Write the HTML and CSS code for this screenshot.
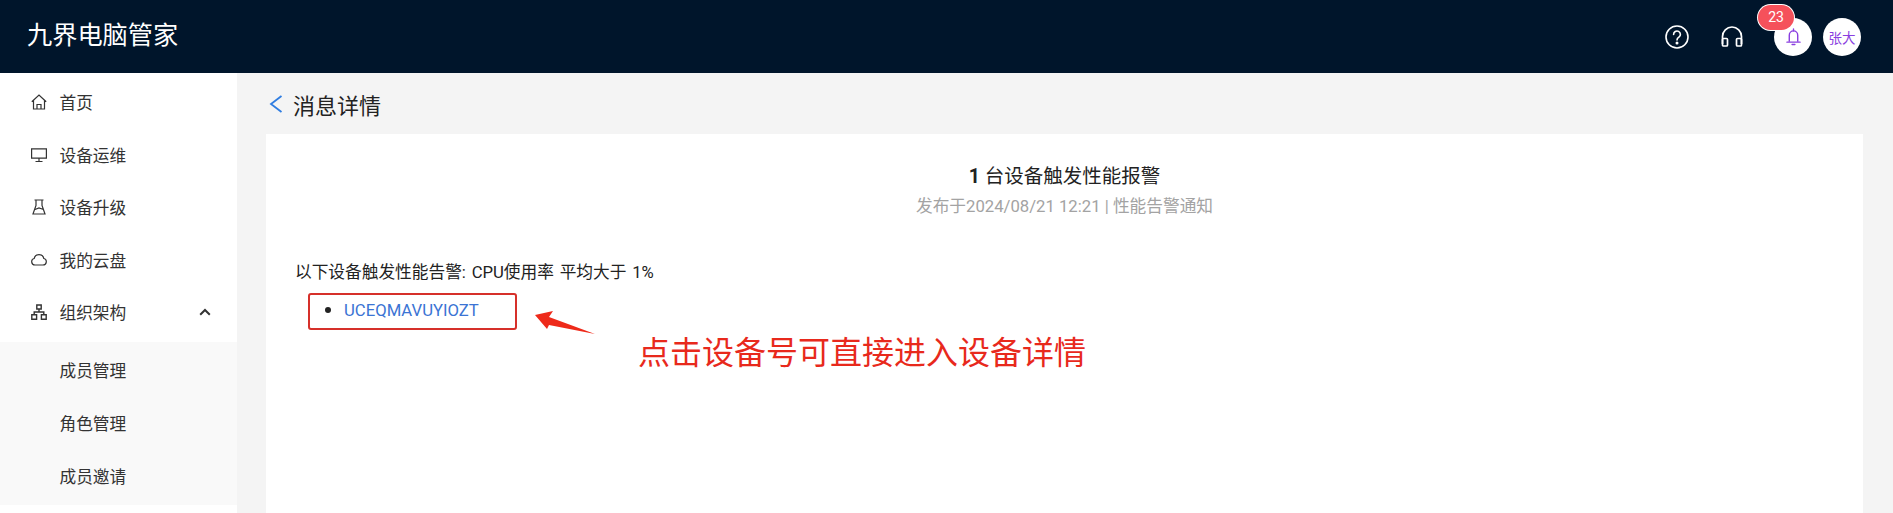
FILE: index.html
```html
<!DOCTYPE html>
<html lang="zh-CN">
<head>
    <meta charset="UTF-8">
    <meta name="viewport" content="width=device-width, initial-scale=1.0">
    <title>九界电脑管家</title>
    <link rel="stylesheet" href="styles.css">
</head>
<body>
    <!-- Top bar -->
    <header class="topbar">
        <div class="logo">九界电脑管家</div>
        <div class="top-actions">
            <svg class="top-icon" viewBox="0 0 24 24" fill="none" stroke="#fff" stroke-width="1.6">
                <circle cx="12" cy="12" r="11"/>
                <path d="M8.600 9.400a3.400 3.400 0 1 1 5.300 2.800c-1.200.8-1.900 1.400-1.900 2.800" stroke-linecap="round"/>
                <circle cx="12" cy="18" r=".7" fill="#fff"/>
            </svg>
            <svg class="top-icon head-icon" viewBox="0 0 22 21" fill="none" stroke="#fff" stroke-width="1.7">
                <path d="M1.500 18V10.500a9.500 9.500 0 0 1 19 0V18"/>
                <rect x="1.500" y="12.500" width="5" height="7.500" rx="1"/>
                <rect x="15.500" y="12.500" width="5" height="7.500" rx="1"/>
            </svg>
            <div class="bell-wrap">
                <span class="badge">23</span>
                <div class="round-btn">
                    <svg class="bell" viewBox="0 0 16 18" fill="none" stroke="#8a3fe0" stroke-width="1.500">
                        <path d="M3.500 14V7a4.500 4.500 0 0 1 9 0v7"/>
                        <path d="M1 14.500h14" stroke-linecap="round"/>
                        <path d="M8 .5v2M6.500 17h3" stroke-linecap="round"/>
                    </svg>
                </div>
            </div>
            <div class="round-btn avatar">张大</div>
        </div>
    </header>

    <div class="layout">
        <!-- Side menu -->
        <nav class="sidebar">
            <a class="menu-item">
                <svg class="menu-icon" viewBox="0 0 16 16" fill="none" stroke="#333" stroke-width="1.200">
                    <path d="M.8 7.800 8 1l7.200 6.800M2.500 6.500v8.500h11V6.500M6 15v-4.500h4V15"/>
                </svg>
                首页
            </a>
            <a class="menu-item">
                <svg class="menu-icon" viewBox="0 0 16 16" fill="none" stroke="#333" stroke-width="1.200">
                    <path d="M.6 1.800h14.800v9.400H.6zM8 11.200v3M4.500 14.500h7"/>
                </svg>
                设备运维
            </a>
            <a class="menu-item">
                <svg class="menu-icon" viewBox="0 0 16 16" fill="none" stroke="#333" stroke-width="1.200">
                    <path d="M3.500 1h9M5 1v5.500L2 15h12l-3-8.500V1M4 10.500 8 9l4.500 1.500"/>
                </svg>
                设备升级
            </a>
            <a class="menu-item">
                <svg class="menu-icon" viewBox="0 0 16 16" fill="none" stroke="#333" stroke-width="1.200">
                    <path d="M4 13a3.300 3.300 0 0 1-.8-6.500 4.900 4.900 0 0 1 9.600 0 3.300 3.300 0 0 1-.8 6.500z"/>
                </svg>
                我的云盘
            </a>
            <a class="menu-item">
                <svg class="menu-icon" viewBox="0 0 16 16" fill="none" stroke="#333" stroke-width="1.400">
                    <path d="M5.800 1h4.400v4H5.800zM.8 10.800h4.800v4.400H.8zM10.400 10.800h4.800v4.400h-4.800zM8 5v3M3.200 10.800V8h9.600v2.800"/>
                </svg>
                组织架构
                <svg class="arrow" viewBox="0 0 12 8" fill="none" stroke="#333" stroke-width="2">
                    <path d="M1.200 6.800 6 2l4.800 4.800"/>
                </svg>
            </a>
            <div class="submenu">
                <a class="sub-item">成员管理</a>
                <a class="sub-item">角色管理</a>
                <a class="sub-item">成员邀请</a>
            </div>
        </nav>

        <!-- Main area -->
        <main class="content">
            <div class="page-head">
                <svg class="back" viewBox="0 0 14 18" fill="none" stroke="#2f7de1" stroke-width="1.800">
                    <path d="M12.500 1 2 9l10.500 8"/>
                </svg>
                <h2 class="page-title">消息详情</h2>
            </div>
            <section class="card">
                <h3 class="msg-title"><b>1</b> 台设备触发性能报警</h3>
                <p class="msg-meta">发布于2024/08/21 12:21 | 性能告警通知</p>
                <p class="msg-text">以下设备触发性能告警: CPU使用率 平均大于 1%</p>
                <div class="msg-row">
                    <div class="device-box">
                        <ul class="device-list">
                            <li><a class="device-link">UCEQMAVUYIOZT</a></li>
                        </ul>
                    </div>
                    <svg class="note-arrow" viewBox="0 0 60 23">
                        <path d="M0 4 18 0 14 6 60 23 14 14 12 18z" fill="#ee2a1a"/>
                    </svg>
                    <div class="note">点击设备号可直接进入设备详情</div>
                </div>
            </section>
        </main>
    </div>
</body>
</html>
```

FILE: styles.css
```css
body, html {
    margin: 0;
    padding: 0;
    height: 100%;
    overflow: hidden;
    font-family: Roboto, "Noto Sans CJK SC", sans-serif;
    color: #222;
}

/* Top bar */
.topbar {
    display: flex;
    justify-content: space-between;
    align-items: center;
    height: 73px;
    padding: 0 32px 0 27px;
    background-color: #00152b;
    box-sizing: border-box;
}

.logo {
    padding-bottom: 8px;
    color: white;
    font-size: 25.200px;
    font-family: "Noto Sans CJK SC", sans-serif;
}

.top-actions {
    display: flex;
    align-items: center;
}

.top-icon {
    width: 24px;
    height: 24px;
    margin-right: 32px;
}

.head-icon {
    width: 22px;
    height: 21px;
    margin-right: 31px;
}

.bell-wrap {
    position: relative;
    margin-right: 11px;
}

.round-btn {
    display: flex;
    justify-content: center;
    align-items: center;
    width: 38px;
    height: 38px;
    border-radius: 50%;
    background-color: white;
}

.bell {
    width: 15px;
    height: 18px;
}

.avatar {
    color: #8a3fe0;
    font-size: 13.500px;
    font-family: "Noto Sans CJK SC", sans-serif;
}

.badge {
    position: absolute;
    top: -13px;
    left: -16px;
    width: 36px;
    height: 25px;
    line-height: 25px;
    text-align: center;
    border-radius: 13px;
    background-color: #f5515b;
    color: white;
    font-size: 14px;
    box-shadow: 0 0 0 1px white;
}

/* Layout */
.layout {
    display: flex;
    height: calc(100% - 73px);
    background-color: #f4f4f4;
}

.sidebar {
    width: 237px;
    flex-shrink: 0;
    background-color: white;
    padding-top: 4px;
    box-sizing: border-box;
}

.menu-item {
    display: flex;
    align-items: center;
    height: 52.500px;
    padding: 0 0 2px 31px;
    box-sizing: border-box;
    font-size: 16.700px;
    color: #333;
}

.menu-icon {
    width: 16px;
    height: 16px;
    margin-right: 12.500px;
}

.arrow {
    width: 12px;
    height: 8px;
    margin-left: auto;
    margin-right: 26px;
}

.submenu {
    margin-top: 2.500px;
    padding: 2px 0 2px 0;
    background-color: #f9f9f9;
}

.sub-item {
    display: flex;
    align-items: center;
    height: 53px;
    padding: 0 0 2px 59.500px;
    box-sizing: border-box;
    font-size: 16.700px;
    color: #333;
}

/* Main area */
.content {
    display: flex;
    flex-direction: column;
    flex: 1;
    padding: 0 30px 0 29px;
    min-width: 0;
}

.page-head {
    display: flex;
    align-items: center;
    flex-shrink: 0;
    height: 61px;
}

.back {
    width: 14px;
    height: 18px;
    margin: 0 10px 0 3px;
}

.page-title {
    margin: 0;
    font-size: 22px;
    font-weight: normal;
}

.card {
    flex: 1;
    padding: 31px 29px 0 29px;
    background-color: white;
    box-sizing: border-box;
}

.msg-title {
    margin: 0;
    text-align: center;
    font-size: 19.500px;
    font-weight: normal;
    line-height: 24px;
}

.msg-title b {
    font-weight: 700;
}

.msg-meta {
    margin: 6px 0 0 0;
    text-align: center;
    font-size: 16.700px;
    line-height: 24px;
    color: #a3a3a3;
}

.msg-text {
    margin: 42px 0 0 0;
    font-size: 16.700px;
    line-height: 24px;
    word-spacing: 1.600px;
}

.msg-row {
    display: flex;
    align-items: flex-start;
    margin-left: 13px;
    margin-top: 8px;
}

.device-box {
    flex-shrink: 0;
    width: 209px;
    height: 37px;
    border: 2px solid #d6302a;
    border-radius: 3px;
    box-sizing: border-box;
}

.device-list {
    margin: 0;
    padding-left: 34px;
    font-size: 16.700px;
    line-height: 28px;
}

.device-list li::marker {
    font-size: 20px;
}

.device-link {
    color: #3b74d4;
}

.note-arrow {
    flex-shrink: 0;
    width: 60px;
    height: 23px;
    margin: 18px 0 0 18px;
}

.note {
    margin: 38px 0 0 43px;
    font-size: 32px;
    line-height: 44px;
    color: #e8291c;
}
```
